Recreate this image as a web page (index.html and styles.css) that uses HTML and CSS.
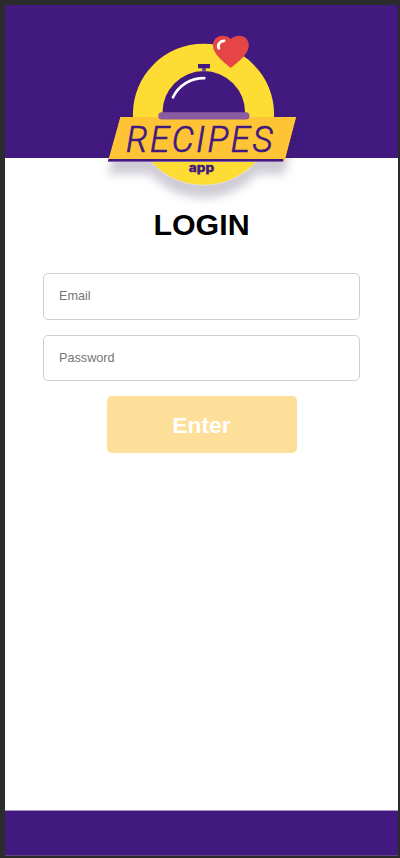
FILE: index.html
```html
<!DOCTYPE html>
<html lang="en">
<head>
<meta charset="utf-8">
<title>Recipes app</title>
<link rel="stylesheet" href="styles.css">
</head>
<body>
<div class="screen">
  <header class="header">
    <svg class="logo" viewBox="98 30 208 180" role="img" aria-label="Recipes app">
      <g class="shadow">
        <circle cx="203.5" cy="114.3" r="70.6" fill="#fddd33"/>
        <path d="M120.500 117H296L284.500 161.300H108Z" fill="#ffc436"/>
      </g>
      <path d="M150.500 161.500A71 71 0 0 0 256.500 161.500" fill="none" stroke="#fff" stroke-width="0.600" stroke-dasharray="2 1"/>
      <path d="M162.500 114V112.500a41.300 41.500 0 0 1 82.600 0V114Z" fill="#41197f"/>
      <path d="M198 64h12v4.300h-12Z" fill="#41197f"/>
      <path d="M202.300 68h3.500v4h-3.500Z" fill="#62409a"/>
      <path d="M173 97.300C178.500 85.500 190 78.200 204.300 78.200" fill="none" stroke="#fff" stroke-width="2.700" stroke-linecap="round"/>
      <path d="M120.500 117H296L284.500 160H109Z" fill="#ffc436"/>
      <path d="M108.500 159H283.300V161H108Z" fill="#41197f"/>
      <path d="M108 161H283V162H108Z" fill="#8560ad"/>
      <rect x="158.300" y="112.200" width="91.200" height="7.400" rx="3.600" fill="#8b5ba1"/>
      <path d="M230.800 68C227 64.500 213 55 213 45.500C213 36.500 223 32.500 230.900 39C239 32.500 248.800 36.500 248.800 45.500C248.800 55 234.800 64.500 230.800 68Z" fill="#e54545"/>
      <path d="M218.800 48.300C217.300 44.500 219.800 41 224 40.900" fill="none" stroke="#fff" stroke-width="2.900" stroke-linecap="round"/>
      <g transform="translate(126 152.400) scale(0.950 1)">
        <text class="logo-name" x="0" y="0" textLength="154.300" lengthAdjust="spacing">RECIPES</text>
      </g>
      <text class="logo-sub" x="188.800" y="172" textLength="25.500" lengthAdjust="spacingAndGlyphs">app</text>
    </svg>
  </header>
  <main class="login">
    <h1 class="title">LOGIN</h1>
    <form class="form">
      <input class="field" type="email" placeholder="Email">
      <input class="field" type="password" placeholder="Password">
      <button class="enter" type="button" disabled>Enter</button>
    </form>
  </main>
  <footer class="footer"></footer>
</div>
</body>
</html>
```

FILE: styles.css
```css
* {
  box-sizing: border-box;
}

body {
  margin: 0;
  padding: 5px 2px 2px 5px;
  height: 858px;
  background: #2b2b2b;
  font-family: "Liberation Sans", Arial, sans-serif;
}

.screen {
  display: flex;
  flex-direction: column;
  height: 851px;
  background: #fff;
}

.header {
  height: 153px;
  padding: 25px 0 0 93px;
  background: #41197f;
}

.logo {
  display: block;
  width: 208px;
  height: 180px;
  overflow: visible;
}

.shadow {
  filter: drop-shadow(0 13px 5px rgba(45, 30, 75, 0.23));
}

.logo-name {
  font: italic 300 36.8px Roboto, sans-serif;
  fill: #41197f;
  stroke: #41197f;
  stroke-width: 0.7px;
}

.logo-sub {
  font: 800 11.6px Inter, Roboto, sans-serif;
  fill: #41197f;
  stroke: #41197f;
  stroke-width: 0.3px;
}

.login {
  flex: 1;
  padding: 48px 38px 0;
}

.title {
  margin: 0;
  font-size: 30.4px;
  line-height: 36px;
  text-align: center;
}

.form {
  display: flex;
  flex-direction: column;
  align-items: center;
  gap: 15px;
  margin-top: 31px;
}

.field {
  width: 317px;
  height: 46.7px;
  padding: 0 15px;
  border: 1px solid #d0d0d0;
  border-radius: 5px;
  background: #fff;
  font: 12.67px "Liberation Sans", Arial, sans-serif;
}

.field::placeholder {
  color: #757575;
}

.enter {
  width: 190px;
  height: 57px;
  padding: 2px 0 0;
  border: 0;
  border-radius: 5px;
  background: #fddf99;
  color: #fff;
  font: bold 22.8px "Liberation Sans", Arial, sans-serif;
}

.footer {
  height: 46px;
  border-top: 1px solid #a794c5;
  border-bottom: 1px solid #604280;
  background: #41197f;
}
```
